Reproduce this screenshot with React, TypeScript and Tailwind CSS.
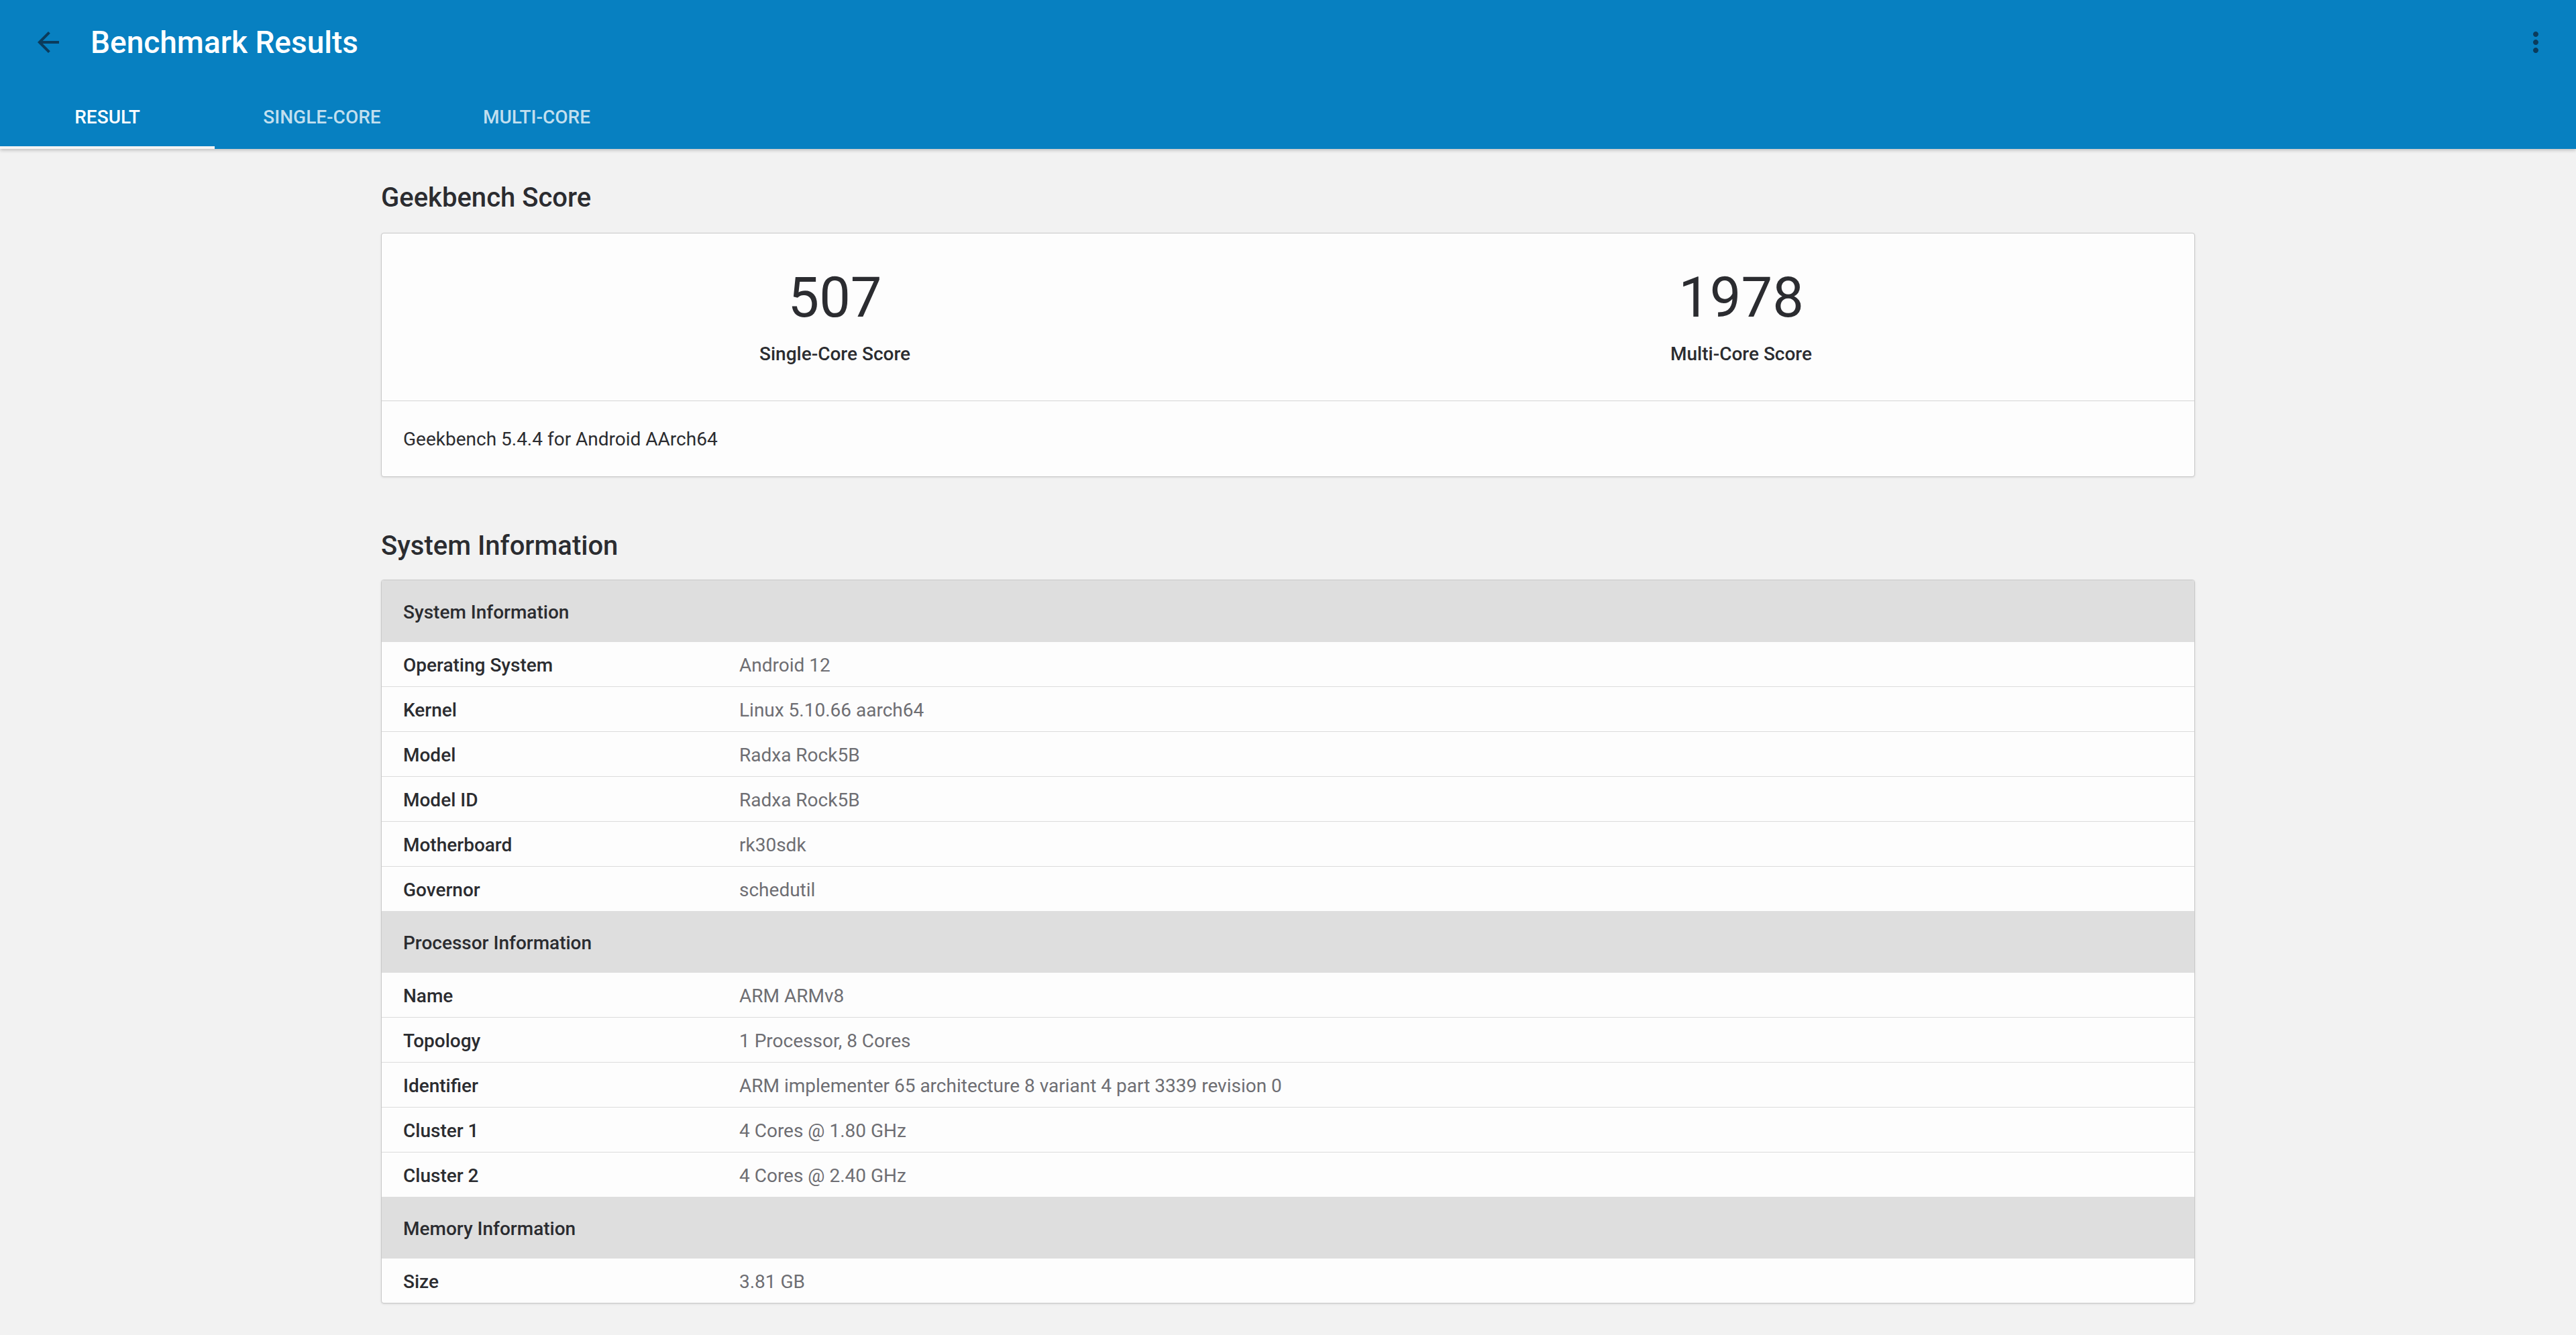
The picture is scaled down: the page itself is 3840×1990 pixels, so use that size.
import React from "react";

const systemRows: [string, string][] = [
  ["Operating System", "Android 12"],
  ["Kernel", "Linux 5.10.66 aarch64"],
  ["Model", "Radxa Rock5B"],
  ["Model ID", "Radxa Rock5B"],
  ["Motherboard", "rk30sdk"],
  ["Governor", "schedutil"],
];

const processorRows: [string, string][] = [
  ["Name", "ARM ARMv8"],
  ["Topology", "1 Processor, 8 Cores"],
  ["Identifier", "ARM implementer 65 architecture 8 variant 4 part 3339 revision 0"],
  ["Cluster 1", "4 Cores @ 1.80 GHz"],
  ["Cluster 2", "4 Cores @ 2.40 GHz"],
];

const memoryRows: [string, string][] = [["Size", "3.81 GB"]];

function GroupHeader({ title }: { title: string }) {
  return (
    <div className="h-[92px] bg-[#dedede] flex items-center pt-[4px] px-8 text-[28px] leading-[28px] font-medium text-[#2b2c30]">
      {title}
    </div>
  );
}

function Rows({ rows }: { rows: [string, string][] }) {
  return (
    <div className="divide-y divide-[#dcdcdc]">
      {rows.map(([k, v]) => (
        <div key={k} className="flex items-center px-8 pt-[21px] pb-[17px] text-[28px] leading-[28px]">
          <div className="w-[501px] shrink-0 font-medium text-[#2b2c30]">{k}</div>
          <div className="text-[#6e6e73]">{v}</div>
        </div>
      ))}
    </div>
  );
}

export default function App() {
  return (
    <div className="min-h-screen bg-[#f2f2f2] font-['Roboto',sans-serif]">
      <header className="relative z-10 bg-[#0780c1] shadow-[0_2px_5px_rgba(0,0,0,0.22)]">
        <div className="h-[126px] flex items-center pl-[48px] pr-[36px]">
          <button className="w-[48px] h-[48px] flex items-center justify-center text-[#0b3b5c]">
            <svg width="48" height="48" viewBox="0 0 24 24" fill="currentColor">
              <path d="M20 11H7.83l5.59-5.59L12 4l-8 8 8 8 1.41-1.41L7.83 13H20v-2z" />
            </svg>
          </button>
          <h1 className="ml-[39px] text-[46px] leading-[46px] font-medium text-white">Benchmark Results</h1>
          <div className="flex-1" />
          <button className="w-[48px] h-[48px] flex items-center justify-center text-[#0b3b5c]">
            <svg width="48" height="48" viewBox="0 0 24 24" fill="currentColor">
              <path d="M12 8c1.1 0 2-.9 2-2s-.9-2-2-2-2 .9-2 2 .9 2 2 2zm0 2c-1.1 0-2 .9-2 2s.9 2 2 2 2-.9 2-2-.9-2-2-2zm0 6c-1.1 0-2 .9-2 2s.9 2 2 2 2-.9 2-2-.9-2-2-2z" />
            </svg>
          </button>
        </div>
        <nav className="flex h-[96px]">
          <div className="w-[320px] pt-[6px] flex items-center justify-center border-b-4 border-[#f4f4f4] text-[28px] leading-[28px] font-medium text-white">
            RESULT
          </div>
          <div className="w-[320px] pt-[6px] flex items-center justify-center border-b-4 border-transparent text-[28px] leading-[28px] font-medium text-white/75">
            SINGLE-CORE
          </div>
          <div className="w-[320px] pt-[6px] flex items-center justify-center border-b-4 border-transparent text-[28px] leading-[28px] font-medium text-white/75">
            MULTI-CORE
          </div>
        </nav>
      </header>

      <main className="w-[2704px] mx-auto pt-[53px] pb-[40px]">
        <h2 className="text-[40px] leading-[40px] font-medium text-[#2b2c30]">Geekbench Score</h2>
        <div className="mt-[32px] rounded-[4px] border border-[#c9c9c9] bg-[#fdfdfd] shadow-[0_1px_3px_rgba(0,0,0,0.1)]">
          <div className="grid grid-cols-2 pt-[54px] pb-[55px] text-[#2b2c30]">
            <div className="flex flex-col items-center">
              <div className="text-[83px] leading-[83px] font-normal">507</div>
              <div className="mt-[29px] text-[28px] leading-[28px] font-medium">Single-Core Score</div>
            </div>
            <div className="flex flex-col items-center">
              <div className="text-[83px] leading-[83px] font-normal">1978</div>
              <div className="mt-[29px] text-[28px] leading-[28px] font-medium">Multi-Core Score</div>
            </div>
          </div>
          <div className="h-[113px] border-t border-[#d6d6d6] flex items-center pt-[2px] px-8 text-[28px] leading-[28px] text-[#2b2c30]">
            Geekbench 5.4.4 for Android AArch64
          </div>
        </div>

        <h2 className="mt-[83px] text-[40px] leading-[40px] font-medium text-[#2b2c30]">System Information</h2>
        <div className="mt-[30px] rounded-[4px] border border-[#c9c9c9] bg-[#fdfdfd] overflow-hidden shadow-[0_1px_3px_rgba(0,0,0,0.1)]">
          <GroupHeader title="System Information" />
          <Rows rows={systemRows} />
          <GroupHeader title="Processor Information" />
          <Rows rows={processorRows} />
          <GroupHeader title="Memory Information" />
          <Rows rows={memoryRows} />
        </div>
      </main>
    </div>
  );
}
